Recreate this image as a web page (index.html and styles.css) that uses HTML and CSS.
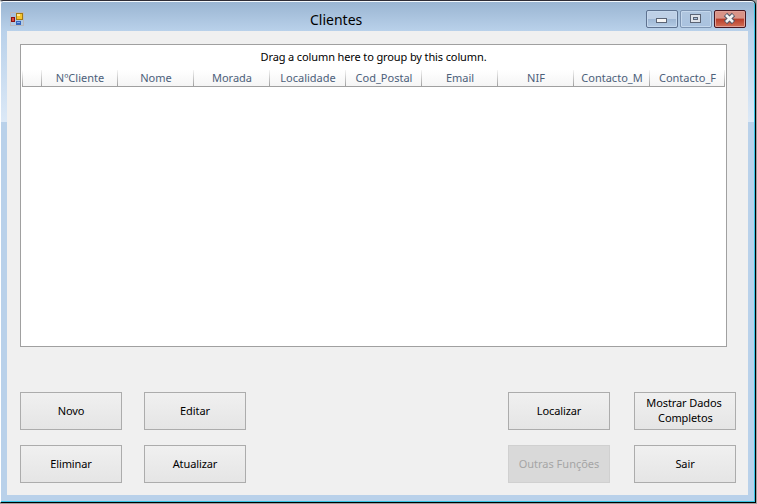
FILE: index.html
```html
<!DOCTYPE html>
<html lang="pt">
<head>
<meta charset="utf-8">
<title>Clientes</title>
<link rel="stylesheet" href="styles.css">
</head>
<body>
<div class="window">
  <header class="titlebar">
    <svg class="app-icon" width="14" height="14" viewBox="0 0 14 14" shape-rendering="crispEdges">
      <path fill="none" stroke="#b9b9bd" d="M.5 .5h13v13H.5z"/>
      <path fill="#a47a10" d="M6 1h7v7H6z"/><path fill="#f5c52e" d="M7 2h5v5H7z"/><path fill="#ffe894" d="M7 2h3v2H7z"/>
      <path fill="#8c1010" d="M1 5h4v5H1z"/><path fill="#d94a3c" d="M2 6h2v3H2z"/>
      <path fill="#3465bd" d="M6 9h5v4H6z"/><path fill="#82aaf0" d="M7 10h3v1H7z"/>
    </svg>
    <h1 class="title">Clientes</h1>
    <div class="controls">
      <span class="control">
        <svg width="32" height="18" shape-rendering="crispEdges"><path fill="#f5f5f5" stroke="#5b6475" d="M10.500 8.500h10v4h-10z"/></svg>
      </span>
      <span class="control faded">
        <svg width="32" height="18" shape-rendering="crispEdges"><path fill="#dfe3ea" stroke="#5b6475" d="M10.500 4.500h10v8h-10z"/><path fill="#a9c0dc" stroke="#5b6475" d="M13.500 7.500h4v2h-4z"/></svg>
      </span>
      <span class="control close">
        <svg width="32" height="18"><path stroke="#535666" stroke-width="4.600" d="M11.500 4.500l8 8M19.500 4.500l-8 8"/><path stroke="#f4f4f4" stroke-width="2.600" d="M12 5l7 7M19 5l-7 7"/></svg>
      </span>
    </div>
  </header>
  <main class="client">
    <section class="grid">
      <div class="group-hint"><span>Drag a column here to group by this column.</span></div>
      <div class="columns">
        <span class="col marker"></span>
        <span class="col">NºCliente</span>
        <span class="col">Nome</span>
        <span class="col">Morada</span>
        <span class="col">Localidade</span>
        <span class="col">Cod_Postal</span>
        <span class="col">Email</span>
        <span class="col">NIF</span>
        <span class="col">Contacto_M</span>
        <span class="col">Contacto_F</span>
      </div>
    </section>
    <div class="actions">
      <button class="btn">Novo</button>
      <button class="btn">Editar</button>
      <button class="btn">Localizar</button>
      <button class="btn two-line">Mostrar Dados<br>&nbsp;Completos</button>
      <button class="btn">Eliminar</button>
      <button class="btn">Atualizar</button>
      <button class="btn" disabled>Outras Funções</button>
      <button class="btn">Sair</button>
    </div>
  </main>
</div>
</body>
</html>
```
FILE: styles.css
```css
* { box-sizing: border-box; }
body {
  margin: 0;
  width: 757px;
  height: 504px;
  overflow: hidden;
  background: #a0a0a0;
  font: 11px/15px "Noto Sans", "Open Sans", sans-serif;
  color: #000;
}
.window {
  width: 756px;
  height: 503px;
  padding: 0 6px 6px;
  border: 1px solid #000;
  border-top-color: #2e2c35;
  border-left-color: #fff;
  border-radius: 3px 5px 0 0;
  box-shadow: inset -1px -1px #37c3e3, inset 0 1px #f4f8fc;
  background:
    linear-gradient(#b9d1ea, #dce9f7) 0 30px / 753px 91px no-repeat,
    linear-gradient(#99b4d1, #b9d1ea) 0 0 / 100% 30px no-repeat,
    #b9d1ea;
}
.titlebar {
  display: flex;
  height: 30px;
}
.app-icon { flex: none; margin: 11px 0 0 3px; }
.title {
  flex: none;
  width: 622px;
  margin: 9px 0 0;
  padding-left: 286px;
  font: 14px/20px "Noto Sans", "Open Sans", sans-serif;
  letter-spacing: 0;
}
.controls {
  display: flex;
  flex: none;
  gap: 2px;
  margin-top: 9px;
}
.control {
  width: 32px;
  height: 18px;
  border: 1px solid #5e7290;
  border-radius: 2px;
  box-shadow: inset 0 0 0 1px #c5d8ed;
  background: linear-gradient(#bed0e6 50%, #9db6d3 50%, #b4cbe5);
}
.control svg { display: block; margin: -1px; }
.faded { border-color: #7d94b2; background: linear-gradient(#b0c6df, #a9c2df); }
.close {
  border-color: #471721;
  box-shadow: inset 0 0 0 1px #e0a198;
  background: linear-gradient(#d99387 45%, #b83c29 50%, #d27158);
}
.client {
  width: 741px;
  height: 464px;
  padding: 13px 12px 0 13px;
  background: #f0f0f0;
}
.grid {
  width: 707px;
  height: 303px;
  padding: 0 1px;
  border: 1px solid #a0a0a0;
  background: #fff;
}
.group-hint {
  height: 25px;
  padding-top: 4px;
  text-align: center;
  letter-spacing: -.12px;
}
.columns {
  display: flex;
  width: 703px;
  height: 17px;
  border-bottom: 1px solid #a0a0a0;
  background:
    linear-gradient(#fff, #a0a0a0) 0 0 / 1px 100% no-repeat,
    linear-gradient(#fff, #f5f5f5);
}
.col {
  flex: 0 0 76px;
  text-align: center;
  color: #4c607a;
  background: linear-gradient(#f4f4f4, #a0a0a0) 100% 0 / 1px 100% no-repeat;
}
.marker { flex-basis: 20px; }
.col:last-child { flex-basis: 75px; }
.actions {
  display: grid;
  grid-template-columns: 124px 364px 126px 102px;
  row-gap: 15px;
  margin-top: 45px;
}
.btn {
  width: 102px;
  height: 38px;
  padding: 0 0 2px;
  border: 1px solid #acacac;
  background: linear-gradient(#f0f0f0, #e5e5e5);
  font: inherit;
  letter-spacing: -.1px;
  color: #000;
}
.two-line { padding-right: 2px; }
.btn:disabled {
  border-color: #d0d0d0;
  background: #d9d9d9;
  letter-spacing: 0;
  color: #a5a5a5;
}
```
